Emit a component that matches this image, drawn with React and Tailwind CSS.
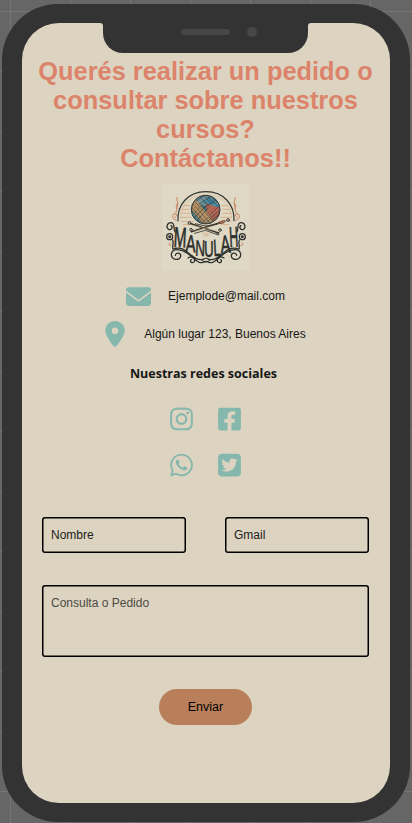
import React from "react";
import {
  FaEnvelope,
  FaLocationDot,
  FaInstagram,
  FaWhatsapp,
  FaSquareTwitter,
} from "react-icons/fa6";
import { FaFacebookSquare } from "react-icons/fa";

const LETTERS = [
  { c: "M", x: 54, y: 206, sx: 0.7, h: 1.28, r: 3 },
  { c: "A", x: 90, y: 221, sx: 0.69, h: 1.1, r: 3 },
  { c: "N", x: 119, y: 233, sx: 0.62, h: 1.02, r: 2 },
  { c: "U", x: 147, y: 236, sx: 0.6, h: 1.02, r: -1 },
  { c: "L", x: 175, y: 234, sx: 0.58, h: 1.06, r: -3 },
  { c: "A", x: 197, y: 226, sx: 0.68, h: 1.14, r: -4 },
  { c: "H", x: 223, y: 207, sx: 0.56, h: 1.3, r: -3 },
];

function Scrolls() {
  return (
    <g fill="none" strokeLinecap="round">
      <g stroke="#2d302c" strokeWidth="3.8">
        <path d="M60 162 C52 157 62 136 48 134 C35 133 31 149 40 154 C49 157 54 147 47 143" />
        <circle cx="43" cy="176" r="9" />
        <circle cx="43" cy="176" r="2.5" />
        <path d="M52 186 C56 194 50 204 53 212" />
        <path d="M150 250 C130 264 118 240 96 226 C78 213 51 209 48 228 C47 246 73 250 76 235 C77 224 62 221 60 232" />
        <path d="M53 213 C79 203 94 221 108 232 C122 244 136 250 150 241" />
        <path d="M98 240 C112 232 122 242 117 251 C110 259 101 249 108 245" />
      </g>
      <g stroke="#c98665" strokeWidth="3">
        <path d="M63 127 C48 122 48 111 59 106 C66 102 61 94 66 84 C71 70 61 65 65 58" />
        <path d="M58 118 C67 116 66 105 58 109 M68 92 C60 88 61 77 68 76" />
        <path d="M44 194 C38 197 43 207 48 202" />
      </g>
    </g>
  );
}

function Logo() {
  return (
    <svg
      role="img"
      aria-label="Manulah"
      className="block h-[88px] w-[88px]"
      viewBox="20 15 264 264"
    >
      <defs>
        <clipPath id="yarn">
          <circle cx="151" cy="95" r="43" />
        </clipPath>
      </defs>
      <rect x="21" y="16" width="261" height="262" fill="#dfd8c4" />
      <g stroke="#d7a47c" strokeWidth="2.4">
        <path d="M82 83H105M78 94H102M76 106H104M75 118H108M77 130H116M82 140H106M197 83H221M202 94H225M201 106H228M196 118H229M187 130H227M198 140H222" />
      </g>
      <path
        d="M68 130 C64 80 99 41 152 41 S239 80 236 130"
        fill="none"
        stroke="#32352f"
        strokeWidth="3.6"
      />
      <path
        d="M77 121 C77 75 111 50 152 50 S227 75 228 121"
        fill="none"
        stroke="#d9ab87"
        strokeWidth="1.6"
      />
      <g clipPath="url(#yarn)">
        <rect x="105" y="50" width="92" height="90" fill="#3c6872" />
        <path d="M105 81 L143 93 L124 139 L103 120Z" fill="#4d838c" />
        <path d="M127 50 L165 50 L151 86 L118 70Z" fill="#77959a" />
        <path d="M142 76 L169 50 L197 72 L193 94Z" fill="#4586a0" />
        <path d="M151 74 L195 92 L193 128 L157 134Z" fill="#a9624f" />
        <path d="M105 71 L125 68 L180 137 L143 141 L108 95Z" fill="#b98e60" />
        <path d="M168 88 L194 86 L198 105 L176 113Z" fill="#b85f4f" />
        <g stroke="#243a40" strokeWidth="1.8" fill="none">
          <path d="M106 84L154 139M112 77L166 137M120 72L177 135M108 95L145 139M129 50L158 83M140 48L170 77M150 48L185 82M160 48L195 82" />
          <path d="M106 118L143 79M111 126L151 84M120 133L158 91M139 137L199 77M149 138L199 89M160 138L198 101M122 70L150 50M130 79L174 49M144 90L190 61" />
        </g>
        <path
          d="M124 72L171 134M117 81L158 137M142 110L187 76M153 121L197 88M112 111L135 88M166 59L188 79"
          fill="none"
          stroke="#d0b282"
          strokeWidth="2"
          strokeDasharray="3 3"
        />
      </g>
      <circle cx="151" cy="95" r="43" fill="none" stroke="#30383a" strokeWidth="3" />
      <g strokeLinecap="round">
        <path d="M101 135 L190 165 M108 161 L203 131" stroke="#34332d" strokeWidth="4.5" />
        <path d="M112 142 L185 160 M118 160 L199 135" stroke="#b99b78" strokeWidth="1.8" />
        <path d="M120 137 L151 144 L185 139 M118 166 L150 157 L183 169" stroke="#34332d" strokeWidth="2.5" fill="none" />
        <path d="M191 136 Q198 125 210 128 Q207 139 191 136Z" fill="#b87350" stroke="#56402e" strokeWidth="2" />
        <g fill="#dcd3bd" stroke="#34332d" strokeWidth="2.8">
          <circle cx="102" cy="135" r="4" />
          <circle cx="107" cy="155" r="4" />
          <circle cx="194" cy="156" r="4" />
          <circle cx="218" cy="126" r="4" />
          <circle cx="187" cy="168" r="3" />
        </g>
      </g>
      <path
        d="M140 168L145 164L149 171L154 164L158 171L164 166M145 173H159"
        fill="none"
        stroke="#d4a281"
        strokeWidth="2"
      />
      <Scrolls />
      <g transform="translate(304 0) scale(-1 1)">
        <Scrolls />
      </g>
      <path d="M139 247L151 253L164 247" fill="none" stroke="#2d302c" strokeWidth="3" />
      {LETTERS.map((l, i) => (
        <text
          key={i}
          transform={`translate(${l.x} ${l.y}) rotate(${l.r}) scale(${l.sx} ${l.h})`}
          fontFamily="'Liberation Sans', sans-serif"
          fontSize="66"
          stroke="#2b2e2a"
          strokeWidth="1.6"
          fill="#2b2e2a"
        >
          {l.c}
        </text>
      ))}
    </svg>
  );
}

function Notch() {
  return (
    <div className="absolute left-[81.5px] top-0 h-[29.5px] w-[205px] rounded-b-[20px] bg-[#333333]">
      <svg className="absolute -left-[3px] top-0 h-[3px] w-[3px]" viewBox="0 0 3 3">
        <path d="M0 0H3V3Q3 0 0 0Z" fill="#333333" />
      </svg>
      <svg className="absolute -right-[3px] top-0 h-[3px] w-[3px]" viewBox="0 0 3 3">
        <path d="M3 0H0V3Q0 0 3 0Z" fill="#333333" />
      </svg>
      <div className="absolute left-[78px] top-[6px] h-[6px] w-[49px] rounded-full bg-[#474747]" />
      <div className="absolute left-[143.5px] top-[4px] h-[10px] w-[10px] rounded-full bg-[#474747]" />
    </div>
  );
}

const field =
  "block rounded-[3px] bg-transparent px-[9px] text-[12px] shadow-[inset_0_0_0_1.5px_#000000] outline-none";

export default function App() {
  return (
    <div className="h-[823px] w-[412px] overflow-hidden bg-[#666666] bg-[linear-gradient(#757575_1px,transparent_1px),linear-gradient(90deg,#757575_1px,transparent_1px)] bg-[size:60px_60px] bg-[position:10px_11px] pl-[2px] pt-[3.5px] font-['Liberation_Sans',Arial,sans-serif] text-[#171717]">
      <div className="h-[818.5px] w-[407.5px] rounded-[56px] bg-[#333333] p-[19.5px]">
        <div className="relative flex h-[779.5px] w-[368px] flex-col items-center overflow-hidden rounded-[37px] bg-[#dcd4c0] pt-[34px]">
          <Notch />
          <h1 className="whitespace-nowrap text-center text-[25.4px] font-bold leading-[29px] text-[#dc846b]">
            Querés realizar un pedido o
            <br />
            consultar sobre nuestros
            <br />
            cursos?
            <br />
            Contáctanos!!
          </h1>
          <div className="mt-[10px]">
            <Logo />
          </div>
          <div className="mt-[12px] flex h-[26px] items-center gap-[17px] text-[12px]">
            <FaEnvelope className="size-[25px] text-[#86b7ad]" />
            <span>Ejemplode@mail.com</span>
          </div>
          <div className="mt-[11.5px] flex h-[26px] items-center gap-[19px] text-[12px]">
            <FaLocationDot className="h-[26px] w-[20px] text-[#86b7ad]" />
            <span>Algún lugar 123, Buenos Aires</span>
          </div>
          <h2 className="mr-[4px] mt-[17.5px] font-['Open_Sans',sans-serif] text-[12.5px] font-bold leading-[20px]">
            Nuestras redes sociales
          </h2>
          <div className="mt-[22px] grid grid-cols-2 gap-x-[25px] gap-y-[19.5px] text-[#86b7ad]">
            <FaInstagram className="h-[26px] w-[23px]" />
            <FaFacebookSquare className="h-[26px] w-[23px]" />
            <FaWhatsapp className="h-[26px] w-[23px]" />
            <FaSquareTwitter className="h-[26px] w-[23px]" />
          </div>
          <form className="mt-[39.5px] flex w-[327px] flex-col items-center">
            <div className="flex w-full justify-between">
              <input
                className={`${field} h-[36px] w-[144px] placeholder:text-[#222222]`}
                placeholder="Nombre"
              />
              <input
                className={`${field} h-[36px] w-[144px] placeholder:text-[#222222]`}
                placeholder="Gmail"
              />
            </div>
            <textarea
              className={`${field} mt-[32px] h-[72px] w-full resize-none pt-[9px] placeholder:text-[#4d4a44]`}
              placeholder="Consulta o Pedido"
            />
            <button
              type="button"
              className="mt-[32px] h-[36px] w-[93px] rounded-full bg-[#b87f5a] text-[12.5px] text-black"
            >
              Enviar
            </button>
          </form>
        </div>
      </div>
    </div>
  );
}
